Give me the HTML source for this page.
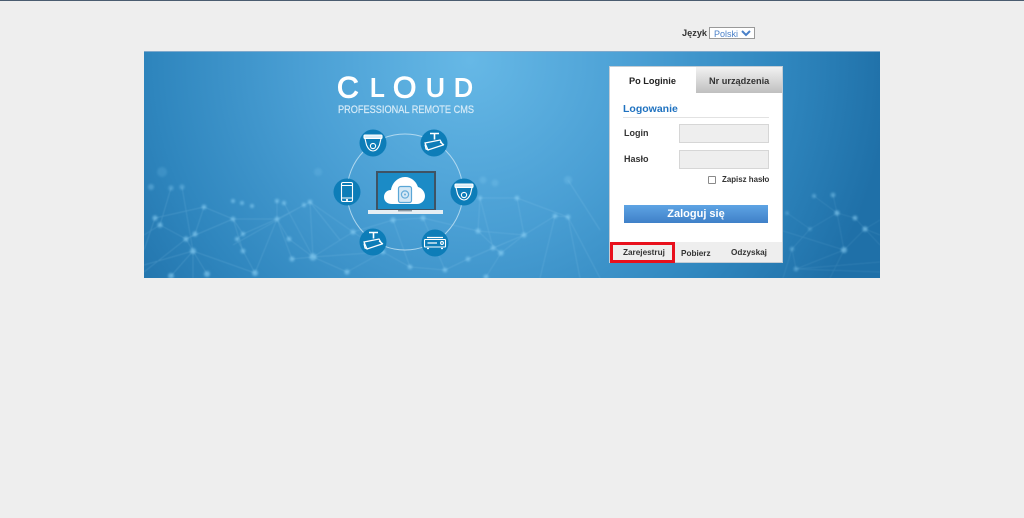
<!DOCTYPE html>
<html lang="pl">
<head>
<meta charset="utf-8">
<title>Cloud</title>
<style>
html,body{margin:0;padding:0;width:1024px;height:518px;overflow:hidden;background:#eeeeee;font-family:"Liberation Sans",sans-serif;}
#wrap{position:relative;width:1024px;height:518px;filter:blur(.35px);}
#top{position:absolute;left:0;top:0;width:1024px;height:1px;background:#4a5c70;}
.a{position:absolute;white-space:nowrap;font-weight:bold;color:#333;}
#banner{position:absolute;left:144px;top:51px;width:736px;height:227px;}
#panel{position:absolute;left:610px;top:67px;width:172px;height:195px;background:#fff;outline:1px solid #c3ccd4;}
</style>
</head>
<body>
<div id="wrap">
<div id="top"></div>
<div class="a" style="left:682px;top:27px;font-size:9.2px;line-height:12px;">Język</div>
<select style="position:absolute;left:709px;top:27px;width:46px;height:12px;font:9px/10px 'Liberation Sans',sans-serif;color:#4a80c8;padding:0;border:1px solid #999;background:#fff;box-sizing:border-box;">
<option>Polski</option>
</select>

<svg id="banner" viewBox="144 51 736 227" width="736" height="227" xmlns="http://www.w3.org/2000/svg">
<defs>
<radialGradient id="bg" gradientUnits="userSpaceOnUse" cx="470" cy="60" r="420">
<stop offset="0" stop-color="#66b8e6"/>
<stop offset=".4" stop-color="#4a9fd4"/>
<stop offset=".75" stop-color="#2f86be"/>
<stop offset="1" stop-color="#1f70a8"/>
</radialGradient>
<filter id="b1" x="-5%" y="-5%" width="110%" height="110%"><feGaussianBlur stdDeviation="1.1"/></filter>
<filter id="b2" x="-5%" y="-5%" width="110%" height="110%"><feGaussianBlur stdDeviation=".5"/></filter>
<g id="dome" fill="none" stroke="#fff" stroke-width="1.1">
<rect x="-9" y="-8" width="18" height="3.5" rx="1" fill="#d8ecf7"/>
<path d="M-8-4.5L-6.5 2Q-4 8 0 8Q4 8 6.5 2L8-4.5"/>
<circle cx="0" cy="3" r="2.6"/>
</g>
<g id="bullet" fill="none" stroke="#fff" stroke-width="1.2">
<path d="M-4-9.5H5M.5-9.5V-3.5" stroke-width="1.6"/>
<path d="M-9-1L6-4L9 1L-6 6Z" transform="translate(0 1)"/>
<path d="M-9 1.5L-8 6L-5 7M6-1L10 2"/>
</g>
</defs>
<rect x="144" y="51" width="736" height="227" fill="url(#bg)"/>
<rect x="144" y="51" width="736" height="1" fill="#7fa9cc"/>

<g stroke="#a9dcf7" stroke-width=".7" opacity=".22" fill="none" filter="url(#b2)">
<path d="M155 218L204 207L233 219L277 219L310 202L313 257L292 259L277 219L289 239L313 257L347 272M160 225L186 239L193 251L207 274M186 239L195 234L204 207M193 251L193 278M155 218L144 250M160 225L144 235M186 239L144 272M193 251L144 265M233 219L186 239M243 234L237 239L243 251L255 273M243 234L233 219M233 219L243 251M277 201L277 219L243 234M277 219L255 273M284 203L313 257M304 205L233 245M310 202L340 240M171 188L160 225M182 187L193 251M171 276L193 251L255 273M313 257L353 232L310 202M353 232L393 220L423 218L478 231L524 235L555 216L568 217L517 198L480 198L478 231M353 232L383 252L410 267L445 270L468 259L493 248L501 253L478 231M347 272L383 252M313 257L383 252M445 270L423 218M468 259L524 235L493 248M501 253L524 235L555 216M568 217L600 278M555 216L540 278M568 217L580 278M568 180L600 230M517 198L524 235M480 198L493 248M486 277L501 253M410 267L393 220"/>
</g>
<g stroke="#a9dcf7" stroke-width=".7" opacity=".14" fill="none" filter="url(#b2)">
<path d="M787 213L810 229L792 249L796 269M814 196L837 213L844 250L865 229L880 220M833 195L837 213L855 218L865 229L880 245M844 250L796 269L880 262M844 250L780 230M810 229L837 213M844 250L865 229M792 249L783 278M844 250L830 278M796 269L880 272M865 229L880 235"/>
</g>
<g fill="#8fd4f8" opacity=".55" filter="url(#b1)">
<circle cx="155" cy="218" r="2.6"/><circle cx="160" cy="225" r="2.6"/><circle cx="186" cy="239" r="2.6"/><circle cx="195" cy="234" r="2.6"/><circle cx="193" cy="251" r="3"/><circle cx="204" cy="207" r="2.4"/><circle cx="233" cy="219" r="2.4"/><circle cx="233" cy="201" r="2"/><circle cx="242" cy="203" r="2"/><circle cx="252" cy="206" r="2"/><circle cx="277" cy="219" r="2.4"/><circle cx="277" cy="201" r="2.2"/><circle cx="284" cy="203" r="2.2"/><circle cx="289" cy="239" r="2.4"/><circle cx="243" cy="234" r="2.2"/><circle cx="237" cy="239" r="2.2"/><circle cx="243" cy="251" r="2.4"/><circle cx="292" cy="259" r="2.6"/><circle cx="313" cy="257" r="3.6"/><circle cx="304" cy="205" r="2.2"/><circle cx="310" cy="202" r="2.4"/><circle cx="207" cy="274" r="3"/><circle cx="171" cy="276" r="3"/><circle cx="255" cy="273" r="3"/>
<circle cx="151" cy="187" r="3" opacity=".6"/><circle cx="171" cy="188" r="2.6" opacity=".6"/><circle cx="182" cy="187" r="2.6" opacity=".6"/><circle cx="318" cy="172" r="4" opacity=".3"/><circle cx="162" cy="172" r="5" opacity=".3"/>
<circle cx="347" cy="272" r="2.6"/><circle cx="353" cy="232" r="2.6"/><circle cx="410" cy="267" r="2.4"/><circle cx="445" cy="270" r="2.4"/><circle cx="468" cy="259" r="2.4"/><circle cx="493" cy="248" r="2.4"/><circle cx="501" cy="253" r="2.8"/><circle cx="478" cy="231" r="2.6"/><circle cx="393" cy="220" r="2.6"/><circle cx="423" cy="218" r="2.6"/><circle cx="383" cy="252" r="2.4"/>
<circle cx="555" cy="216" r="2.4"/><circle cx="568" cy="217" r="2.4"/><circle cx="524" cy="235" r="2.6"/><circle cx="517" cy="198" r="2.4"/><circle cx="480" cy="198" r="2.2"/><circle cx="568" cy="180" r="4" opacity=".4"/><circle cx="495" cy="183" r="3.5" opacity=".4"/><circle cx="483" cy="180" r="3.5" opacity=".4"/><circle cx="486" cy="277" r="2.6"/>
<circle cx="814" cy="196" r="2.2" opacity=".7"/><circle cx="833" cy="195" r="2.4" opacity=".8"/><circle cx="837" cy="213" r="2.6"/><circle cx="855" cy="218" r="2.4"/><circle cx="865" cy="229" r="2.6"/><circle cx="844" cy="250" r="3"/><circle cx="792" cy="249" r="2.2" opacity=".7"/><circle cx="796" cy="269" r="2.4" opacity=".7"/><circle cx="810" cy="229" r="2" opacity=".5"/><circle cx="787" cy="213" r="2" opacity=".5"/>
</g>

<text font-family="Liberation Sans" font-size="26" fill="#fff" stroke="#fff" stroke-width="1.1"><tspan x="337" y="97.5" font-size="30">C</tspan><tspan x="370" y="96.5">L</tspan><tspan x="393" y="97.5" font-size="30">O</tspan><tspan x="426" y="96.5">U</tspan><tspan x="454" y="96.5">D</tspan></text>
<text x="338" y="113" font-family="Liberation Sans" font-size="10.8" fill="#d6ebf8" stroke="#d6ebf8" stroke-width=".2" textLength="136" lengthAdjust="spacingAndGlyphs">PROFESSIONAL REMOTE CMS</text>

<circle cx="405" cy="192" r="58" fill="none" stroke="#bfe0f3" stroke-width="1" opacity=".85"/>

<g fill="#0d7db8">
<circle cx="373" cy="143" r="13.5"/><circle cx="434" cy="143" r="13.5"/><circle cx="347" cy="192" r="13.5"/><circle cx="464" cy="192" r="13.5"/><circle cx="373" cy="242" r="13.5"/><circle cx="435" cy="243" r="13.5"/>
</g>
<use href="#dome" transform="translate(373 143)"/>
<use href="#bullet" transform="translate(434 143)"/>
<use href="#dome" transform="translate(464 192)"/>
<use href="#bullet" transform="translate(373 242)"/>
<g fill="none" stroke="#fff" stroke-width="1.1" transform="translate(347 192)">
<rect x="-5.5" y="-9.5" width="11" height="19" rx="1.5"/>
<path d="M-5.5-6.5H5.5M-5.5 6H5.5"/>
<circle cx="0" cy="8" r=".6"/>
</g>
<g fill="none" stroke="#fff" stroke-width="1.1" transform="translate(435 243)">
<rect x="-10.5" y="-3.5" width="21" height="7.5" rx=".8"/>
<path d="M-7.5 0H2M-8-5.5H8M-8 5.5H-6M6 5.5H8" stroke-width="1.2"/>
<circle cx="7" cy="0" r="1.4"/>
</g>

<rect x="377" y="172" width="58" height="38" fill="#1b8bc6" stroke="#3f5364" stroke-width="2"/>
<rect x="368" y="210" width="75" height="4" fill="#e6eef3"/>
<rect x="398" y="210" width="14" height="1.4" fill="#8b9aa5"/>
<path d="M392 204C387 204 384 201 384 197C384 193 387 190 391 190C392 183 398 177 405 177C411 177 416 181 418 187C422 188 425 192 425 196C425 201 421 204 417 204Z" fill="#fff"/>
<rect x="398.5" y="186.5" width="13" height="16" rx="2" fill="#d5e8f5" stroke="#5aa6d6" stroke-width="1.2"/>
<circle cx="405" cy="194.5" r="3.6" fill="none" stroke="#6aaeda" stroke-width="1.2"/>
<circle cx="405" cy="194.5" r="1" fill="#6aaeda"/>
</svg>

<div id="panel"></div>
<div style="position:absolute;left:696px;top:67px;width:86px;height:26px;background:linear-gradient(#f2f2f2,#bfbfbf);"></div>
<div class="a" style="left:629px;top:75px;font-size:9.2px;line-height:12px;color:#222;">Po Loginie</div>
<div class="a" style="left:709px;top:75px;font-size:9.2px;line-height:12px;color:#333;">Nr urządzenia</div>
<div class="a" style="left:623px;top:103px;font-size:10.5px;line-height:13px;color:#1f72c0;">Logowanie</div>
<div style="position:absolute;left:623px;top:117px;width:146px;height:1px;background:#e2e2e2;"></div>
<div class="a" style="left:624px;top:127px;font-size:9px;line-height:12px;">Login</div>
<div style="position:absolute;left:679px;top:124px;width:90px;height:19px;box-sizing:border-box;background:#eeeeee;border:1px solid #d6d6d6;"></div>
<div class="a" style="left:624px;top:153px;font-size:9px;line-height:12px;">Hasło</div>
<div style="position:absolute;left:679px;top:150px;width:90px;height:19px;box-sizing:border-box;background:#eeeeee;border:1px solid #d6d6d6;"></div>
<div style="position:absolute;left:708px;top:176px;width:6px;height:6px;background:#fff;border:1px solid #8a8a8a;border-radius:1px;"></div>
<div class="a" style="left:722px;top:175px;font-size:7.9px;line-height:10px;">Zapisz hasło</div>
<div class="a" style="left:624px;top:205px;width:144px;height:18px;line-height:18px;text-align:center;font-size:11px;color:#fff;background:linear-gradient(#5ea4e4,#3f80c8);">Zaloguj się</div>
<div style="position:absolute;left:610px;top:242px;width:172px;height:20px;background:#eeeeee;"></div>
<div style="position:absolute;left:610px;top:242px;width:65px;height:21px;box-sizing:border-box;border:3px solid #e8101c;"></div>
<div class="a" style="left:623px;top:247px;font-size:8.2px;line-height:11px;">Zarejestruj</div>
<div class="a" style="left:681px;top:248px;font-size:8.2px;line-height:11px;">Pobierz</div>
<div class="a" style="left:731px;top:247px;font-size:8.2px;line-height:11px;">Odzyskaj</div>
</div>
</body>
</html>
